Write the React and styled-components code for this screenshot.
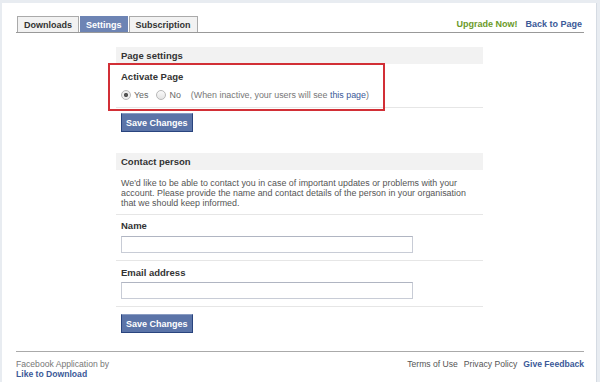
import React from "react"
import styled, { createGlobalStyle } from "styled-components"

const GlobalStyle = createGlobalStyle`
  * { box-sizing: border-box; }
  body {
    margin: 0;
    background: #e8ecf1;
    font-family: "Liberation Sans", Arial, sans-serif;
    font-size: 9px;
    color: #333;
  }
`

const Frame = styled.div`
  padding: 3px 3px 0 2px;
  height: 382px;
`

const Panel = styled.div`
  background: #fff;
  height: 379px;
  padding: 14px 12px 0 14px;
  border-right: 1px solid #d5dbe3;
`

const TopBar = styled.div`
  display: flex;
  justify-content: space-between;
  align-items: flex-end;
  height: 16px;
  border-bottom: 1px solid #999;
`

const Tabs = styled.div`
  display: flex;
  gap: 1px;
  padding-left: 1px;
`

const Tab = styled.div`
  height: 16px;
  padding: 0 ${p => p.pad}px;
  display: flex;
  align-items: center;
  font-weight: bold;
  font-size: 9px;
  background: ${p => (p.active ? "#6d84b4" : "#f2f2f2")};
  color: ${p => (p.active ? "#fff" : "#333")};
  border: 1px solid ${p => (p.active ? "#6d84b4" : "#aaa")};
  border-bottom: none;
`

const TopLinks = styled.div`
  display: flex;
  gap: 8px;
  padding: 0 2px 3px 0;
  font-weight: bold;
  font-size: 9px;
`

const Link = styled.a`
  color: ${p => p.color || "#3b5998"};
  font-weight: ${p => (p.bold ? "bold" : "normal")};
  text-decoration: none;
`

const Column = styled.div`
  margin-left: 100px;
  width: 367px;
`

const Section = styled.div`
  margin-top: ${p => p.top}px;
  position: relative;
`

const Header = styled.div`
  height: 17px;
  background: #f2f2f2;
  display: flex;
  align-items: center;
  padding-left: 5px;
  font-weight: bold;
  font-size: 9.5px;
  color: #333;
`

const Row = styled.div`
  padding: ${p => p.pt}px 5px ${p => p.pb}px;
  border-bottom: 1px solid #e6e6e6;
`

const Label = styled.div`
  font-weight: bold;
  font-size: 9.5px;
  line-height: 10px;
  color: #333;
`

const Radios = styled.div`
  display: flex;
  align-items: center;
  margin-top: 7px;
  height: 12px;
  color: #666;
  font-size: 8.9px;
  line-height: 12px;
`

const Radio = styled.span`
  display: inline-flex;
  align-items: center;
  gap: 3px;
  margin-right: 8px;
  &::before {
    content: "";
    width: 8px;
    height: 8px;
    border-radius: 50%;
    border: 1px solid #b8b8b8;
    background: ${p =>
      p.checked
        ? "radial-gradient(circle, #555 0 1.8px, #eee 2.4px)"
        : "linear-gradient(#fafafa, #e4e4e4)"};
  }
`

const Hint = styled.span`
  margin-left: 2px;
  color: #777;
`

const Highlight = styled.div`
  position: absolute;
  left: -8px;
  top: 16px;
  width: 277px;
  height: 48px;
  border: 2px solid #d22f36;
  pointer-events: none;
`

const Button = styled.button`
  display: block;
  margin: ${p => p.top}px 0 0 5px;
  height: 19px;
  padding: 0 4px;
  background: #5b74a8;
  border: 1px solid #29447e;
  border-top-color: #8a9cc2;
  color: #fff;
  font-family: "Liberation Sans", Arial, sans-serif;
  font-weight: bold;
  font-size: 9px;
`

const Para = styled.p`
  margin: 0;
  line-height: 10px;
  color: #555;
  font-size: 8.9px;
  white-space: nowrap;
`

const Input = styled.div`
  width: 292px;
  height: 17px;
  margin-top: ${p => p.top}px;
  border: 1px solid #c8ccd6;
  border-top-color: #b0b5c2;
  background: #fff;
`

const Footer = styled.div`
  margin-top: 18px;
  border-top: 1px solid #aaa;
  padding: 7px 0 0 0;
  display: flex;
  justify-content: space-between;
  font-size: 8.6px;
`

const Credit = styled.div`
  color: #777;
  line-height: 10px;
  display: flex;
  flex-direction: column;
`

const FootLinks = styled.div`
  display: flex;
  gap: 6px;
  line-height: 10px;
  color: #555;
`

export default function App() {
  return (
    <Frame>
      <GlobalStyle />
      <Panel>
        <TopBar>
          <Tabs>
            <Tab pad={6}>Downloads</Tab>
            <Tab pad={5} active>Settings</Tab>
            <Tab pad={6}>Subscription</Tab>
          </Tabs>
          <TopLinks>
            <Link color="#6b9a2a" bold>Upgrade Now!</Link>
            <Link bold>Back to Page</Link>
          </TopLinks>
        </TopBar>

        <Column>
          <Section top={14}>
            <Header>Page settings</Header>
            <Row pt={8} pb={6}>
              <Label>Activate Page</Label>
              <Radios>
                <Radio checked>Yes</Radio>
                <Radio>No</Radio>
                <Hint>
                  (When inactive, your users will see <Link>this page</Link>)
                </Hint>
              </Radios>
            </Row>
            <Highlight />
            <Button top={5}>Save Changes</Button>
          </Section>

          <Section top={21}>
            <Header>Contact person</Header>
            <Row pt={8} pb={6}>
              <Para>
                We'd like to be able to contact you in case of important updates or problems with your
                <br />
                account. Please provide the name and contact details of the person in your organisation
                <br />
                that we should keep informed.
              </Para>
            </Row>
            <Row pt={6} pb={7}>
              <Label>Name</Label>
              <Input top={5} />
            </Row>
            <Row pt={7} pb={7}>
              <Label>Email address</Label>
              <Input top={4} />
            </Row>
            <Button top={7}>Save Changes</Button>
          </Section>
        </Column>

        <Footer>
          <Credit>
            <span>Facebook Application by</span>
            <Link bold>Like to Download</Link>
          </Credit>
          <FootLinks>
            <span>Terms of Use</span>
            <span>Privacy Policy</span>
            <Link bold>Give Feedback</Link>
          </FootLinks>
        </Footer>
      </Panel>
    </Frame>
  )
}
